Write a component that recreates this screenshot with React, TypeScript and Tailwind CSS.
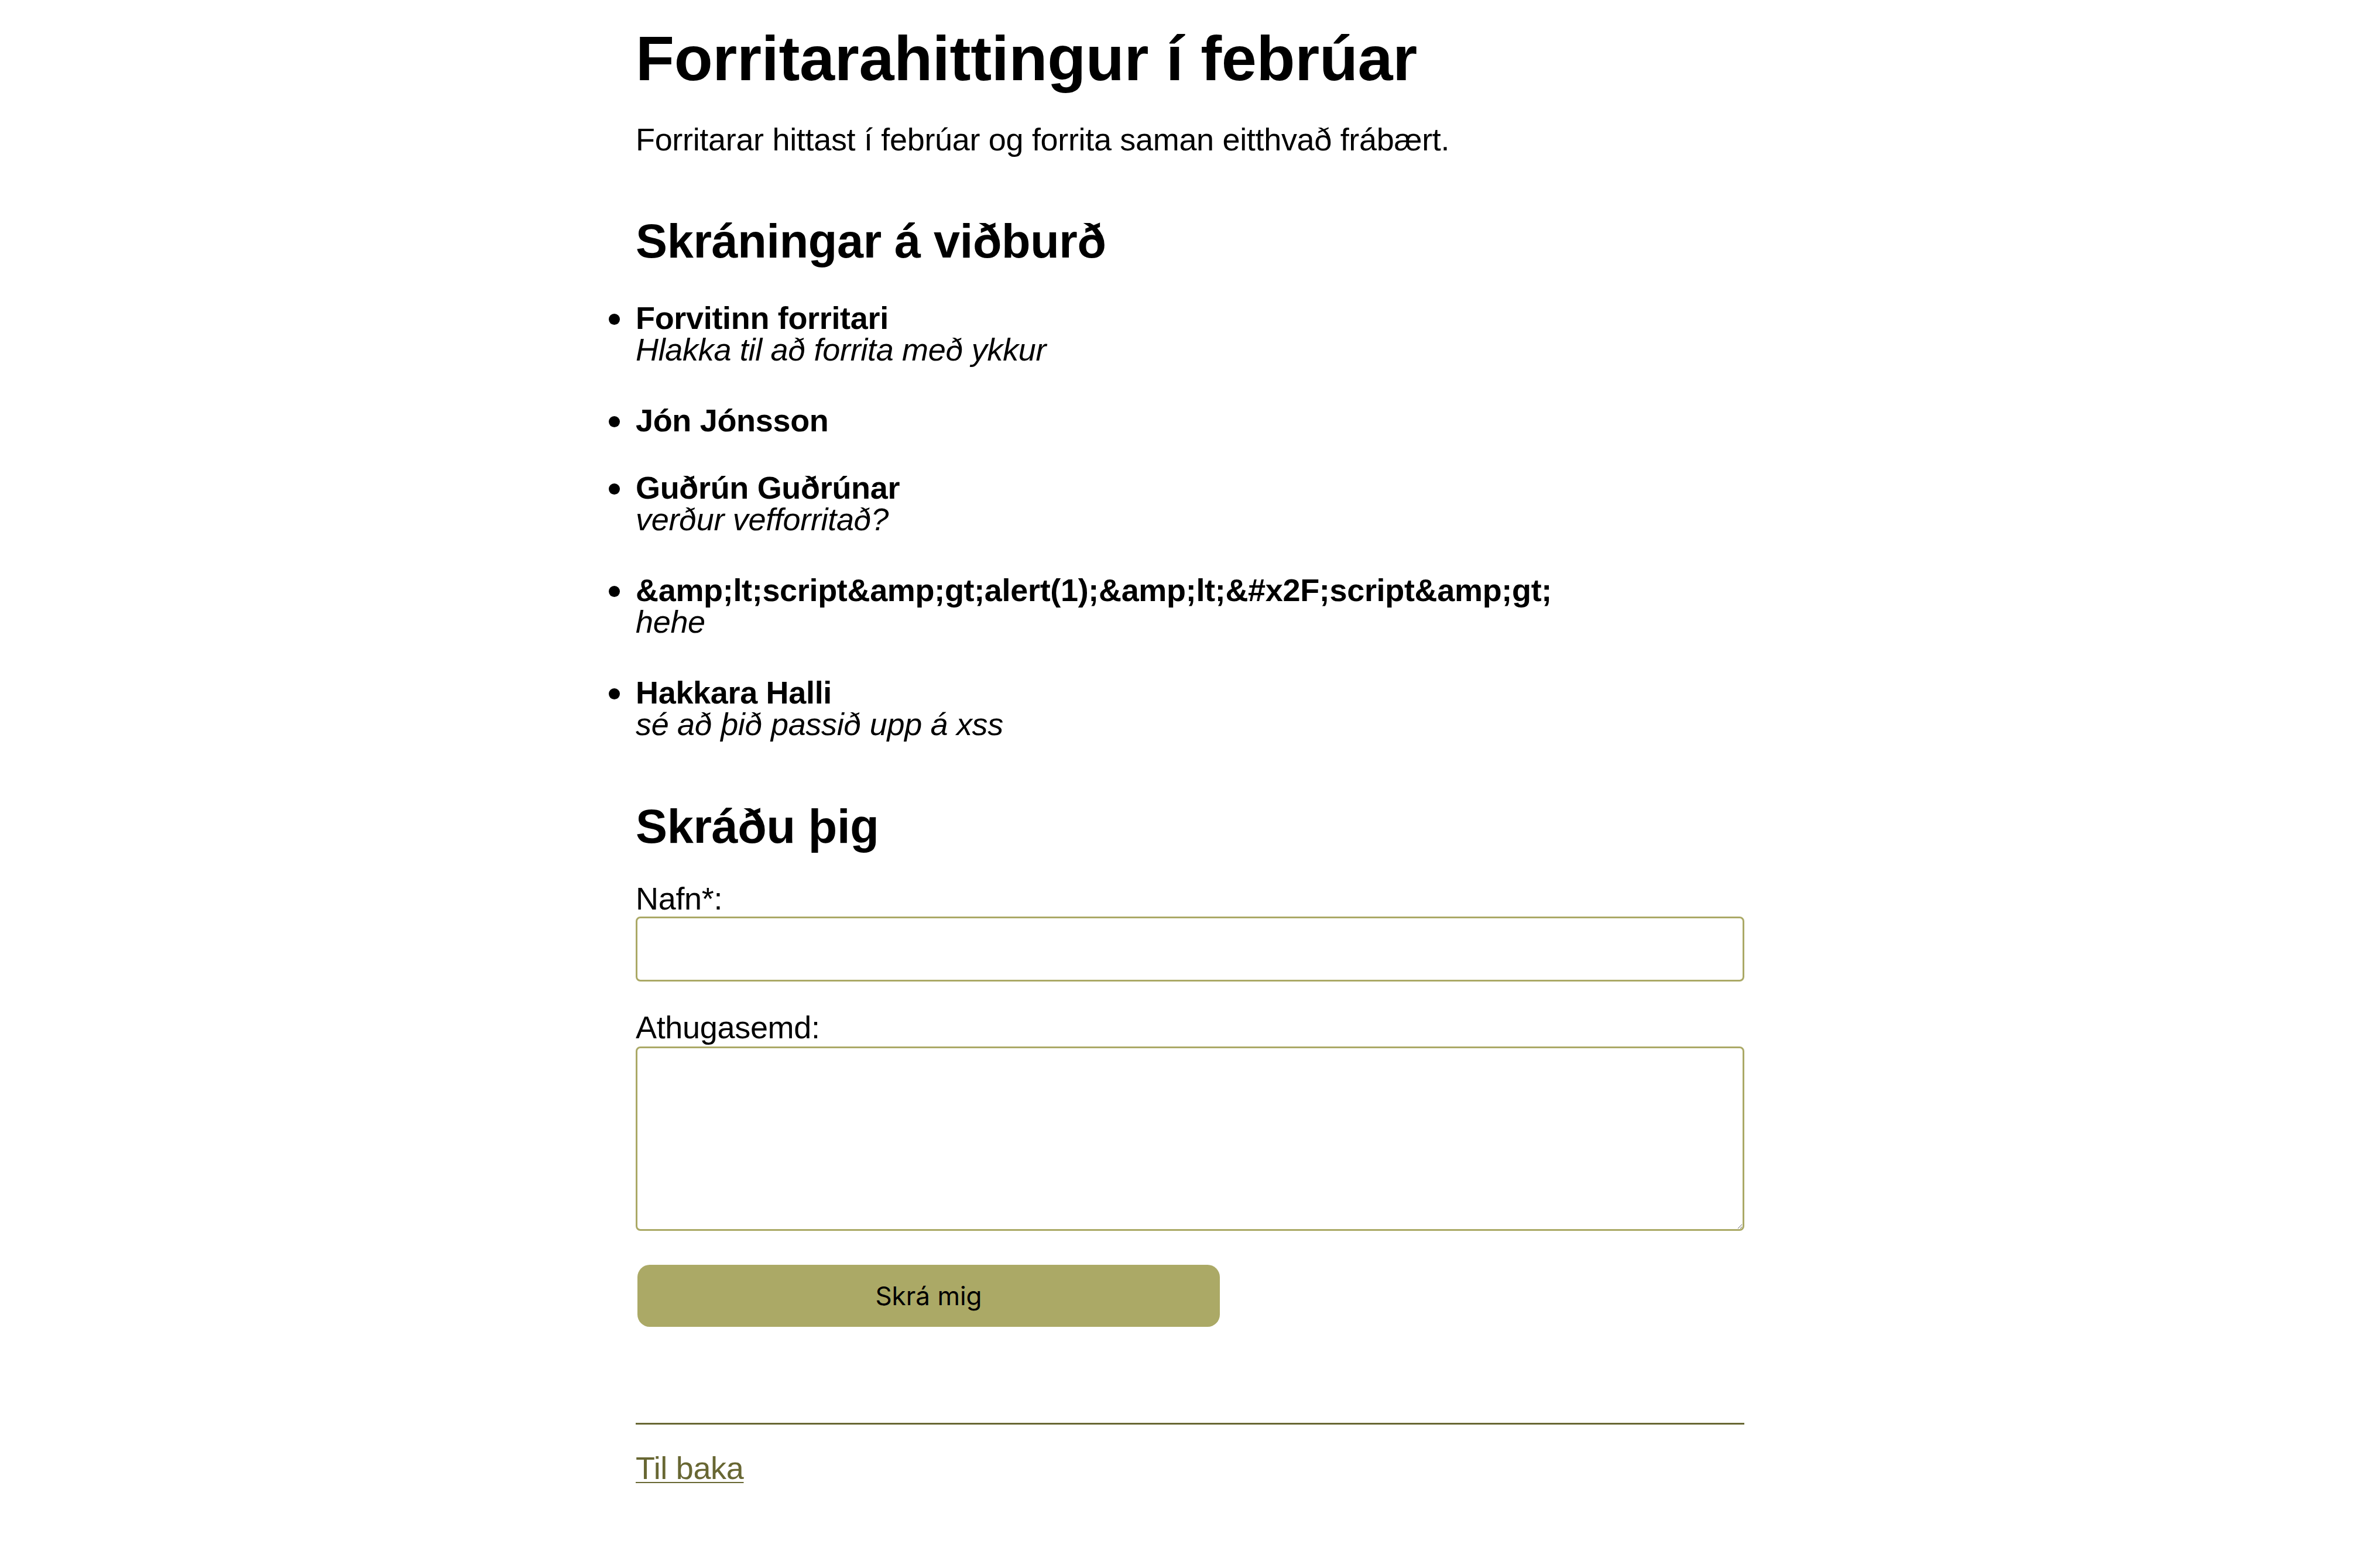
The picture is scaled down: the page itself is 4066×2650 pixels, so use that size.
import React from "react";

const skraningar = [
  { nafn: "Forvitinn forritari", athugasemd: "Hlakka til að forrita með ykkur" },
  { nafn: "Jón Jónsson", athugasemd: "" },
  { nafn: "Guðrún Guðrúnar", athugasemd: "verður vefforritað?" },
  {
    nafn: "&amp;lt;script&amp;gt;alert(1);&amp;lt;&#x2F;script&amp;gt;",
    athugasemd: "hehe",
  },
  { nafn: "Hakkara Halli", athugasemd: "sé að þið passið upp á xss" },
];

export default function App() {
  return (
    <div className="min-h-screen bg-white text-black font-['Liberation_Sans',Arial,sans-serif] text-[54px] tracking-[-0.006em]">
      <main className="mx-auto w-[1894px] pt-[38px] pb-[80px]">
        {/* Viðburður */}
        <h1 className="text-[108px] leading-[124px] font-bold">Forritarahittingur í febrúar</h1>
        <p className="mt-[45px] leading-[62px]">
          Forritarar hittast í febrúar og forrita saman eitthvað frábært.
        </p>

        {/* Skráningar */}
        <h2 className="mt-[97px] text-[81px] leading-[93px] font-bold">Skráningar á viðburð</h2>
        <ul className="mt-[57px] flex flex-col gap-[61px]">
          {skraningar.map((s, i) => (
            <li key={i} className="relative leading-[54px]">
              <span className="absolute left-[-46px] top-[20px] w-[19px] h-[19px] rounded-full bg-black"></span>
              <div className="font-bold">{s.nafn}</div>
              {s.athugasemd && <div className="italic mb-[6px]">{s.athugasemd}</div>}
            </li>
          ))}
        </ul>

        {/* Skráningarform */}
        <h2 className="mt-[96px] text-[81px] leading-[93px] font-bold">Skráðu þig</h2>
        <form className="mt-[49px] flex flex-col" onSubmit={(e) => e.preventDefault()}>
          <label htmlFor="name" className="leading-[54px]">Nafn*:</label>
          <input
            id="name"
            type="text"
            className="mt-[4px] h-[111px] w-full rounded-[8px] border-[3px] border-[#aba966] bg-white px-[8px] outline-none"
          />
          <label htmlFor="comment" className="mt-[51px] leading-[54px]">Athugasemd:</label>
          <textarea
            id="comment"
            className="mt-[6px] h-[315px] w-full rounded-[8px] border-[3px] border-[#aba966] bg-white px-[8px] outline-none"
          ></textarea>
          <button
            type="submit"
            className="mt-[58px] ml-[3px] h-[106px] w-[995px] rounded-[21px] bg-[#aba966] font-['Inter',sans-serif] text-[44px] tracking-normal text-black"
          >
            Skrá mig
          </button>
        </form>

        <hr className="mt-[164px] border-0 border-t-[3px] border-[#686733]" />
        <a href="#" className="mt-[47px] inline-block leading-[54px] text-[#686733] underline decoration-2 underline-offset-[5px]">
          Til baka
        </a>
      </main>
    </div>
  );
}
